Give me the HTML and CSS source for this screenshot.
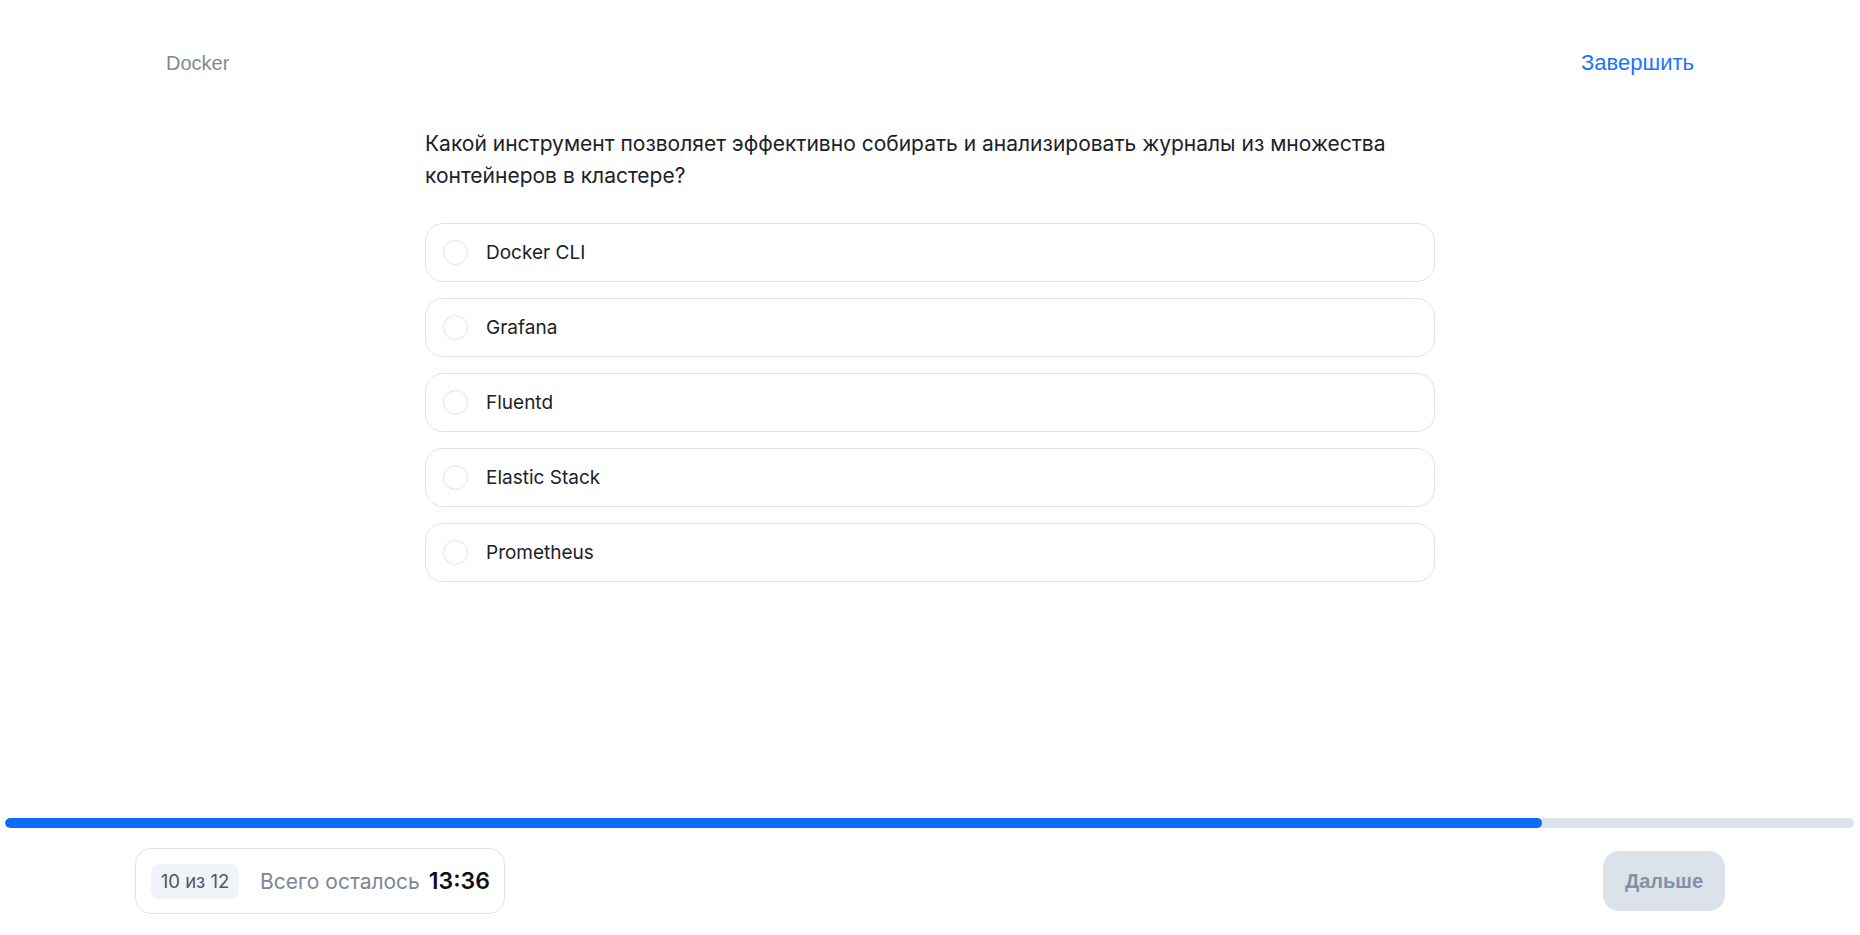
FILE: index.html
```html
<!DOCTYPE html>
<html lang="ru">
<head>
<meta charset="utf-8">
<title>Docker — тест</title>
<link rel="stylesheet" href="styles.css">
</head>
<body>
<header class="top">
  <span class="topic">Docker</span>
  <a class="finish" href="#">Завершить</a>
</header>
<main class="quiz">
  <h1 class="question">Какой инструмент позволяет эффективно собирать и анализировать журналы из множества контейнеров в кластере?</h1>
  <div class="options">
    <label class="option"><span class="radio"></span><span class="label">Docker CLI</span></label>
    <label class="option"><span class="radio"></span><span class="label">Grafana</span></label>
    <label class="option"><span class="radio"></span><span class="label">Fluentd</span></label>
    <label class="option"><span class="radio"></span><span class="label">Elastic Stack</span></label>
    <label class="option"><span class="radio"></span><span class="label">Prometheus</span></label>
  </div>
</main>
<div class="progress"><div class="progress-fill" style="width: 83.1%"></div></div>
<footer class="bottom">
  <div class="status">
    <span class="counter">10 из 12</span>
    <span class="left-label">Всего осталось</span>
    <span class="timer">13:36</span>
  </div>
  <button class="next">Дальше</button>
</footer>
</body>
</html>
```

FILE: styles.css
```css
* { box-sizing: border-box; }
html, body { margin: 0; padding: 0; }
body {
  height: 100vh;
  display: flex;
  flex-direction: column;
  background: #ffffff;
  font-family: Inter, "Noto Sans", sans-serif;
  color: #1f2530;
}
.top {
  display: flex;
  justify-content: space-between;
  align-items: center;
  padding: 51px 166px 0;
  font-family: "Liberation Sans", Arial, sans-serif;
  font-size: 20px;
  line-height: 24px;
}
.topic { color: #7f8b9c; }
.finish { color: #1b74ff; text-decoration: none; font-size: 22px; }
.quiz {
  width: 1010px;
  margin: 0 auto;
  flex: 1;
}
.question {
  margin: 53px 0 31px;
  font-size: 21px;
  font-weight: 400;
  line-height: 32px;
  color: #1c212b;
}
.options {
  display: flex;
  flex-direction: column;
  gap: 16px;
}
.option {
  display: flex;
  align-items: center;
  height: 59px;
  padding-left: 17px;
  border: 1px solid #dfe4ec;
  border-radius: 18px;
  gap: 18px;
  cursor: pointer;
}
.radio {
  width: 25px;
  height: 25px;
  border: 1px solid #dfe4ec;
  border-radius: 50%;
  flex: none;
}
.label { font-size: 19px; color: #1c212b; }
.progress {
  height: 10px;
  margin: 0 6px 0 5px;
  background: #dce3ea;
  border-radius: 5px;
  overflow: hidden;
}
.progress-fill {
  height: 100%;
  background: #0a6cff;
  border-radius: 5px;
}
.bottom {
  display: flex;
  justify-content: space-between;
  align-items: center;
  padding: 20px 135px 21px 135px;
}
.status {
  display: flex;
  align-items: center;
  height: 66px;
  padding: 0 14px 0 15px;
  border: 1px solid #dfe4ec;
  border-radius: 16px;
}
.counter {
  display: flex;
  align-items: center;
  justify-content: center;
  width: 88px;
  height: 35px;
  border-radius: 8px;
  background: #f0f3f7;
  color: #4d5664;
  font-size: 18.5px;
}
.left-label {
  margin-left: 21px;
  font-size: 21px;
  color: #7d8796;
}
.timer {
  margin-left: 9px;
  font-size: 23px;
  font-weight: 600;
  color: #0d0f13;
}
.next {
  width: 122px;
  height: 60px;
  border: none;
  border-radius: 16px;
  background: #dbe2ea;
  color: #7f92a6;
  font-family: "Liberation Sans", Arial, sans-serif;
  font-weight: 700;
  font-size: 20px;
  cursor: default;
}
```
